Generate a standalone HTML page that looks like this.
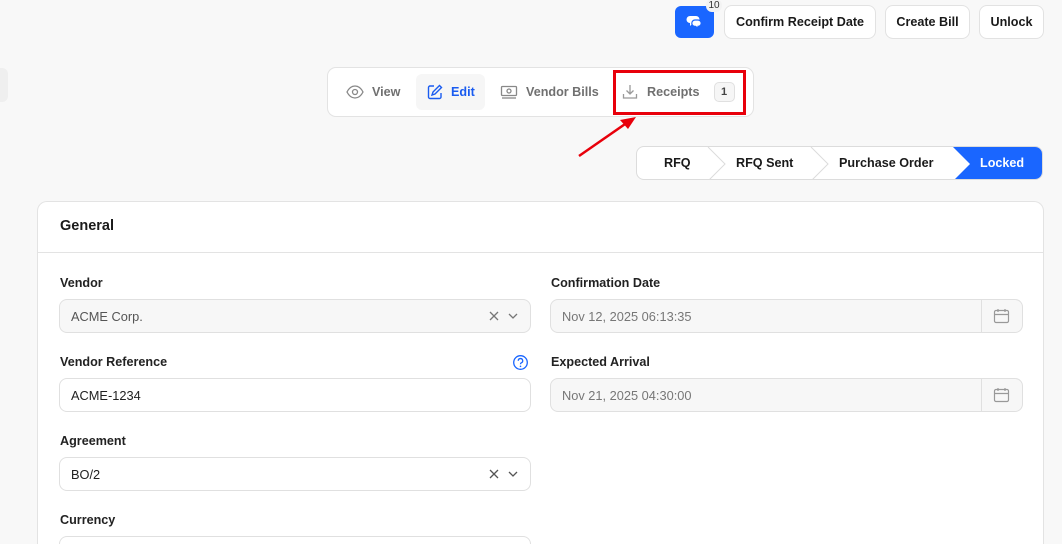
<!DOCTYPE html>
<html style="width:1062px;height:544px;overflow:hidden"><head><style>
*{box-sizing:border-box;margin:0;padding:0}
body{width:1062px;height:544px;overflow:hidden;background:#f8f8f8;font-family:"Liberation Sans",sans-serif;position:relative;color:#1a1a1a}
.abs{position:absolute}
.btn{position:absolute;top:5px;height:34px;background:#fff;border:1px solid #e2e2e2;border-radius:8px;font-size:12.6px;font-weight:bold;display:flex;align-items:center;justify-content:center}
.lbl{position:absolute;font-size:12.6px;font-weight:bold;color:#222}
.inp{position:absolute;height:34px;border:1px solid #e0e0e0;border-radius:8px;font-size:12.8px;display:flex;align-items:center;padding-left:11px}
.tab{position:absolute;top:74px;height:36px;display:flex;align-items:center;font-size:12.6px;font-weight:bold;color:#707070}
</style></head><body>
<div class="abs" style="left:0;top:68px;width:8px;height:34px;background:#efefef;border-radius:0 6px 6px 0"></div>
<div class="abs" style="left:675px;top:6px;width:39px;height:32px;background:#1a66ff;border-radius:6px">
<svg width="39" height="32" viewBox="0 0 39 32"><path d="M15 10h6a3.5 3.5 0 0 1 0 7h-3l-3 3v-3a3.5 3.5 0 0 1 0-7z" fill="#fff"/><path d="M20 14h3a3.2 3.2 0 0 1 0 6.4v2l-2.5-2h-.5a3.2 3.2 0 0 1 0-6.4z" fill="#fff" stroke="#1a66ff" stroke-width="1.2"/></svg></div>
<div class="abs" style="left:706px;top:-1px;width:16px;height:13px;background:#f3f3f3;border-radius:6px;font-size:10px;text-align:center;line-height:13px;color:#333">10</div>
<div class="btn" style="left:724px;width:152px">Confirm Receipt Date</div>
<div class="btn" style="left:885px;width:85px">Create Bill</div>
<div class="btn" style="left:979px;width:65px">Unlock</div>

<div class="abs" style="left:327px;top:67px;width:427px;height:50px;background:#fff;border:1px solid #e3e3e3;border-radius:9px"></div>
<div class="tab" style="left:346px"><svg width="18" height="14" viewBox="0 0 18 14" style="margin-right:8px"><path d="M1 7c2-4 5-6 8-6s6 2 8 6c-2 4-5 6-8 6s-6-2-8-6z" fill="none" stroke="#888" stroke-width="1.3"/><circle cx="9" cy="7" r="2.5" fill="none" stroke="#888" stroke-width="1.3"/></svg>View</div>
<div class="tab" style="left:416px;width:69px;background:#f6f6f6;border-radius:6px;padding-left:11px;color:#1a5cf0"><svg width="16" height="16" viewBox="0 0 16 16" style="margin-right:8px"><path d="M7 2H3a1.5 1.5 0 0 0-1.5 1.5v9.5A1.5 1.5 0 0 0 3 14.5h9.5a1.5 1.5 0 0 0 1.5-1.5V9" fill="none" stroke="#1a5cf0" stroke-width="1.4"/><path d="M12.5 1.5l2 2L8 10l-3 1 1-3z" fill="none" stroke="#1a5cf0" stroke-width="1.4"/></svg>Edit</div>
<div class="tab" style="left:500px"><svg width="18" height="14" viewBox="0 0 18 14" style="margin-right:8px"><rect x="1.5" y="1.5" width="15" height="9" rx="1" fill="none" stroke="#888" stroke-width="1.3"/><circle cx="9" cy="6" r="2" fill="none" stroke="#888" stroke-width="1.3"/><path d="M2 13h14" stroke="#888" stroke-width="1.3"/></svg>Vendor Bills</div>
<div class="tab" style="left:622px"><svg width="16" height="16" viewBox="0 0 16 16" style="margin-right:9px"><path d="M8 1v9M4.5 6.5L8 10l3.5-3.5M1.5 10v4h13v-4" fill="none" stroke="#999" stroke-width="1.3"/></svg>Receipts<span style="margin-left:14px;width:21px;height:20px;border:1px solid #e0e0e0;background:#f6f6f6;border-radius:5px;font-size:11px;color:#444;display:flex;align-items:center;justify-content:center">1</span></div>
<div class="abs" style="left:613px;top:70px;width:133px;height:45px;border:3px solid #e8000b"></div>
<svg class="abs" style="left:570px;top:110px" width="80" height="52"><path d="M9 46L58 12" stroke="#e8000b" stroke-width="2.5"/><path d="M66 7L50 10L58 19z" fill="#e8000b"/></svg>

<div class="abs" style="left:636px;top:146px;width:407px;height:34px;background:#fff;border:1px solid #dcdcdc;border-radius:8px;overflow:hidden">
<svg class="abs" style="left:0;top:0" width="407" height="34"><path d="M316 0h91v34h-91l17-17z" fill="#1a66ff"/><path d="M71 0l17 17-17 17M174 0l17 17-17 17" fill="none" stroke="#dcdcdc"/></svg>
<div class="abs" style="left:27px;top:9px;font-size:12.6px;font-weight:bold">RFQ</div>
<div class="abs" style="left:99px;top:9px;font-size:12.6px;font-weight:bold">RFQ Sent</div>
<div class="abs" style="left:202px;top:9px;font-size:12.6px;font-weight:bold">Purchase Order</div>
<div class="abs" style="left:343px;top:9px;font-size:12.6px;font-weight:bold;color:#fff">Locked</div>
</div>

<div class="abs" style="left:37px;top:201px;width:1007px;height:343px;background:#fff;border:1px solid #e3e3e3;border-bottom:none;border-radius:10px 10px 0 0"></div>
<div class="abs" style="left:38px;top:252px;width:1005px;height:1px;background:#e3e3e3"></div>
<div class="abs" style="left:60px;top:218px;font-size:14.5px;font-weight:bold">General</div>

<div class="lbl" style="left:60px;top:276px">Vendor</div>
<div class="inp" style="left:59px;top:299px;width:472px;background:#f7f7f7;color:#555">ACME Corp.</div>
<svg class="abs" style="left:487px;top:309px" width="34" height="14"><path d="M3 3l8 8M11 3l-8 8" stroke="#777" stroke-width="1.3"/><path d="M22 5l4 4 4-4" fill="none" stroke="#777" stroke-width="1.3"/></svg>
<div class="lbl" style="left:60px;top:355px">Vendor Reference</div>
<svg class="abs" style="left:512px;top:354px" width="17" height="17"><circle cx="8.5" cy="8.5" r="6.8" fill="none" stroke="#1a66ff" stroke-width="1.3"/><path d="M6.3 6.8a2.2 2.2 0 1 1 3 2c-.6.3-.8.7-.8 1.4" fill="none" stroke="#1a66ff" stroke-width="1.3"/><circle cx="8.5" cy="12.3" r=".8" fill="#1a66ff"/></svg>
<div class="inp" style="left:59px;top:378px;width:472px;background:#fff;color:#222">ACME-1234</div>
<div class="lbl" style="left:60px;top:434px">Agreement</div>
<div class="inp" style="left:59px;top:457px;width:472px;background:#fff;color:#222">BO/2</div>
<svg class="abs" style="left:487px;top:467px" width="34" height="14"><path d="M3 3l8 8M11 3l-8 8" stroke="#555" stroke-width="1.3"/><path d="M22 5l4 4 4-4" fill="none" stroke="#555" stroke-width="1.3"/></svg>
<div class="lbl" style="left:60px;top:513px">Currency</div>
<div class="inp" style="left:59px;top:536px;width:472px;height:8px;border-bottom:none;border-radius:8px 8px 0 0;background:#fff"></div>

<div class="lbl" style="left:551px;top:276px">Confirmation Date</div>
<div class="inp" style="left:550px;top:299px;width:473px;background:#f7f7f7;color:#777">Nov 12, 2025 06:13:35</div>
<div class="abs" style="left:981px;top:300px;width:1px;height:32px;background:#e0e0e0"></div>
<svg class="abs" style="left:993px;top:308px" width="17" height="16"><rect x="1.5" y="2.5" width="14" height="12" rx="1.5" fill="none" stroke="#999" stroke-width="1.2"/><path d="M1.5 6.5h14M5 1v3M12 1v3" stroke="#999" stroke-width="1.2"/></svg>
<div class="lbl" style="left:551px;top:355px">Expected Arrival</div>
<div class="inp" style="left:550px;top:378px;width:473px;background:#f7f7f7;color:#777">Nov 21, 2025 04:30:00</div>
<div class="abs" style="left:981px;top:379px;width:1px;height:32px;background:#e0e0e0"></div>
<svg class="abs" style="left:993px;top:387px" width="17" height="16"><rect x="1.5" y="2.5" width="14" height="12" rx="1.5" fill="none" stroke="#999" stroke-width="1.2"/><path d="M1.5 6.5h14M5 1v3M12 1v3" stroke="#999" stroke-width="1.2"/></svg>
</body></html>
